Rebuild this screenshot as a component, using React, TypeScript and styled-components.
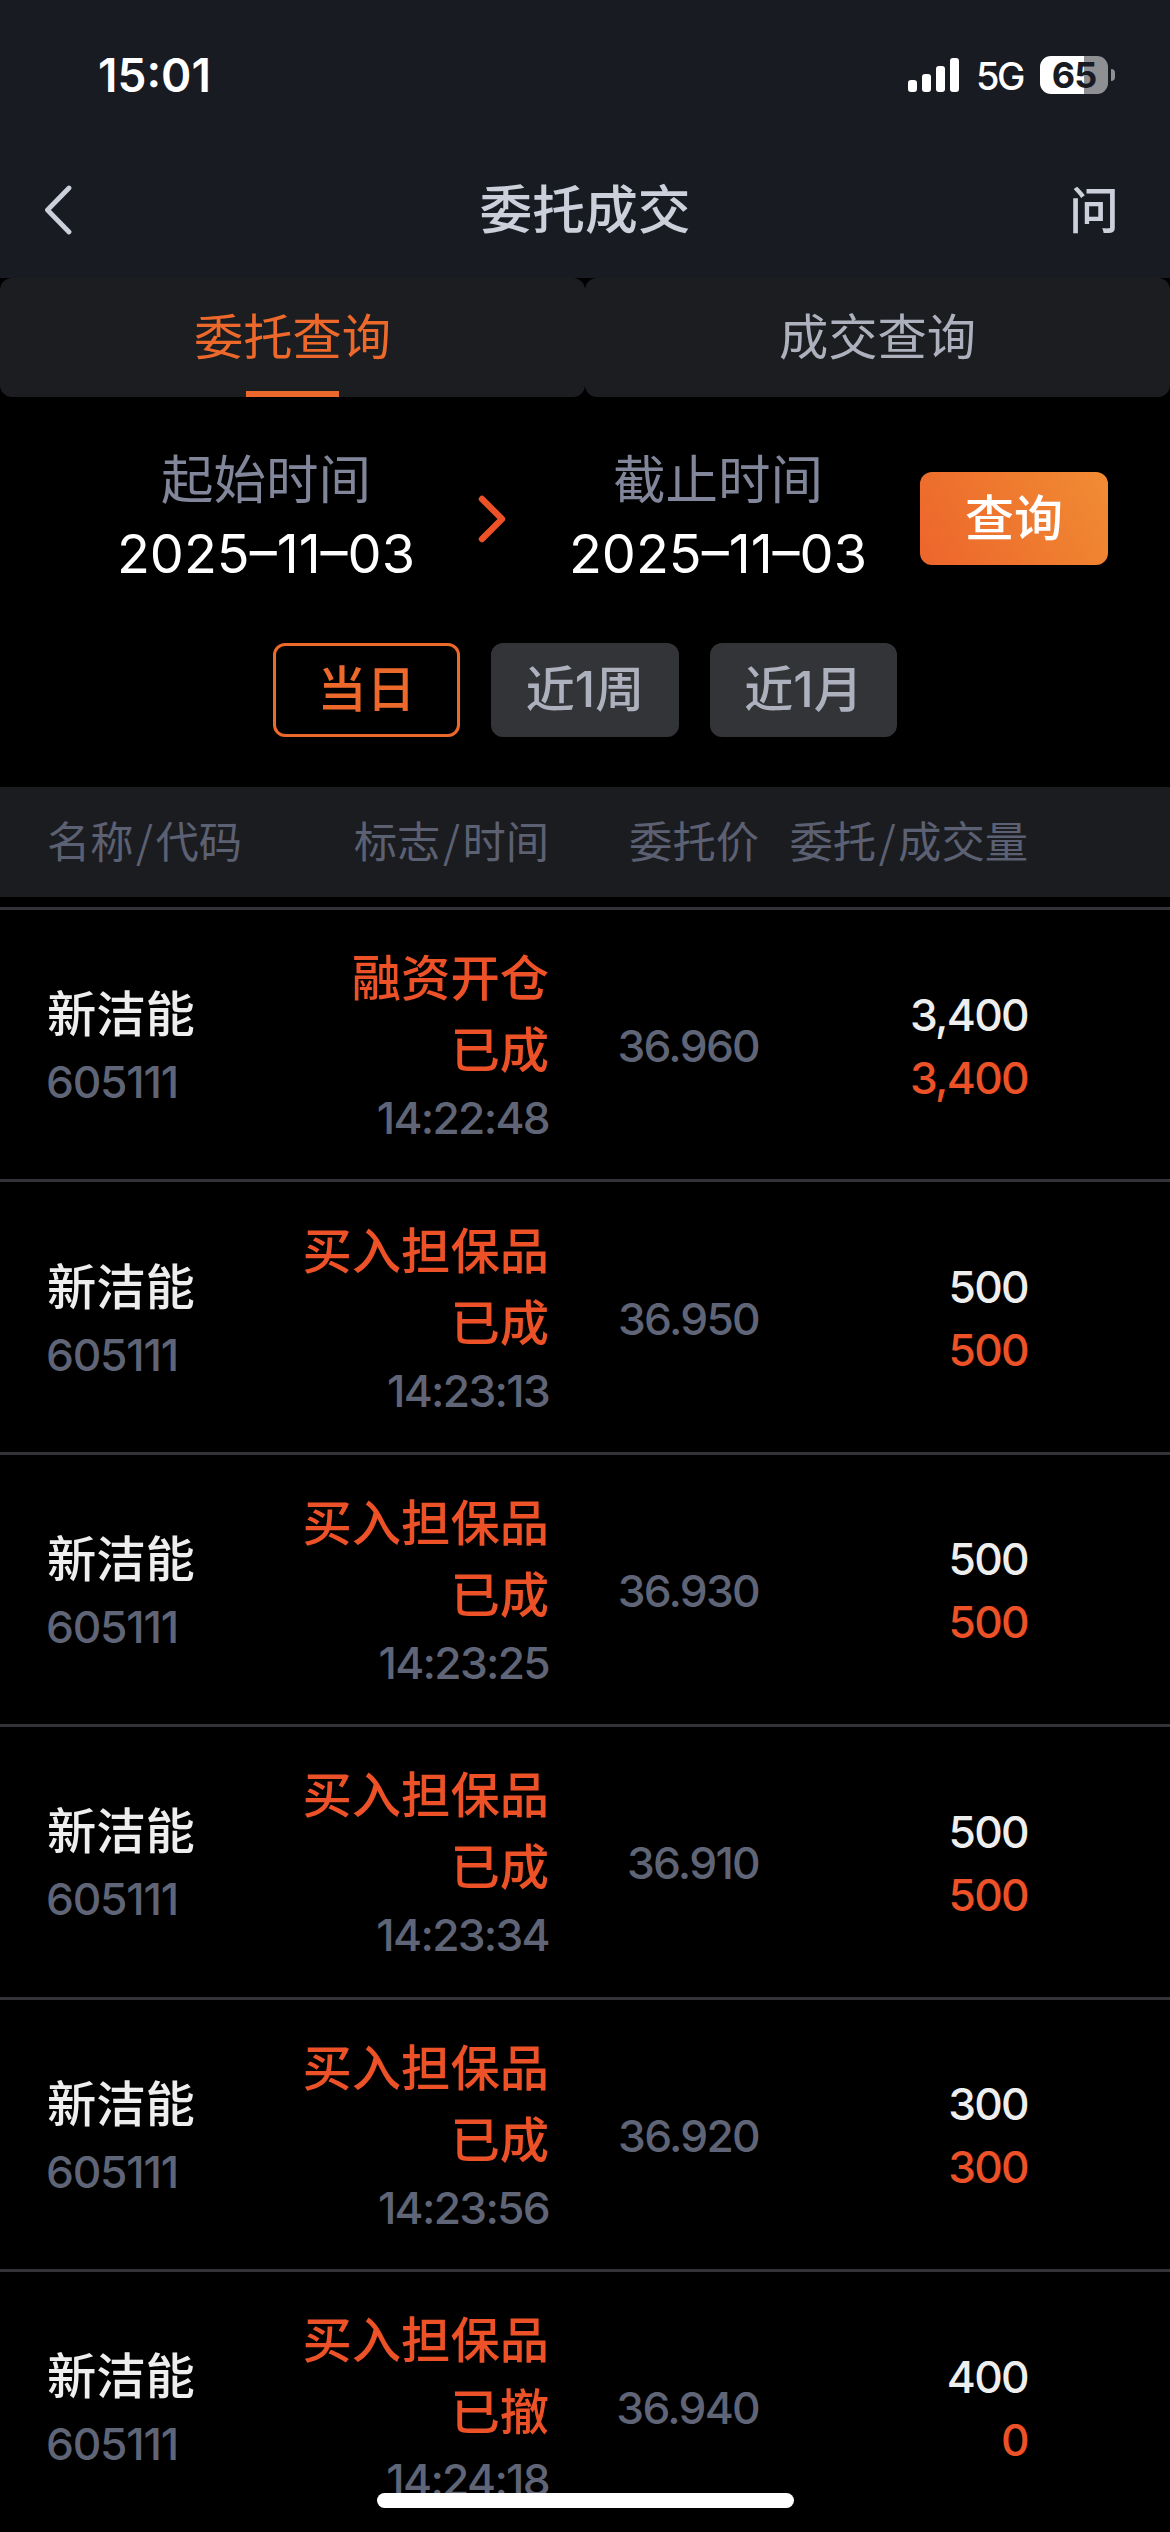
import React from "react";
import styled, { createGlobalStyle } from "styled-components";

const GlobalStyle = createGlobalStyle`
  * { box-sizing: border-box; }
  body { margin: 0; background: #000; }
`;

const Screen = styled.div`
  position: relative;
  display: flex;
  flex-direction: column;
  width: 1170px;
  height: 2532px;
  overflow: hidden;
  background: #000;
  font-family: Inter, "Noto Sans CJK SC", sans-serif;
  white-space: nowrap;
`;

const Top = styled.header`
  flex: none;
  height: 278px;
  background: #181b22;
`;

const StatusBar = styled.div`
  display: flex;
  align-items: center;
  justify-content: space-between;
  height: 149px;
  padding: 0 55px 0 98px;
  color: #fff;
`;

const Clock = styled.span`
  font-size: 46px;
  font-weight: 600;
  line-height: 56px;
`;

const StatusIcons = styled.div`
  display: flex;
  align-items: center;
`;

const Network = styled.span`
  margin: 2px 17px 0 16px;
  font-size: 38px;
  font-weight: 500;
  line-height: 44px;
  letter-spacing: -2.4px;
`;

const Battery = styled.div`
  display: flex;
  align-items: center;
  justify-content: center;
  width: 68px;
  height: 38px;
  border-radius: 11px;
  background: linear-gradient(90deg, #fff 65%, #8f9094 65%);
  color: #181b22;
  font-size: 36px;
  font-weight: 700;
  line-height: 38px;
  letter-spacing: -1px;
`;

const BatteryTip = styled.div`
  width: 4px;
  height: 12px;
  margin-left: 3px;
  border-radius: 0 4px 4px 0;
  background: #8f9094;
`;

const NavBar = styled.nav`
  display: grid;
  grid-template-columns: 200px 1fr 200px;
  align-items: center;
  height: 122px;
  padding: 0 53px;
  color: #ccd0db;
`;

const BackGlyph = styled.svg`
  margin-left: -10px;
`;

const Title = styled.h1`
  margin: 0;
  text-align: center;
  font-size: 52.8px;
  font-weight: 500;
  line-height: 72px;
`;

const Help = styled.span`
  margin-right: -2px;
  padding-top: 2px;
  text-align: right;
  font-size: 50px;
  font-weight: 500;
  line-height: 70px;
`;

const Tabs = styled.div`
  display: grid;
  grid-template-columns: 1fr 1fr;
  flex: none;
  height: 119px;
`;

const Tab = styled.div<{ $active?: boolean }>`
  display: flex;
  flex-direction: column;
  align-items: center;
  justify-content: space-between;
  padding-top: 23px;
  border-radius: 12px;
  background: #1c1d20;
  color: ${(p) => (p.$active ? "#ed692b" : "#adb1bd")};
  font-size: 49.3px;
  line-height: 72px;
`;

const TabLine = styled.div`
  width: 93px;
  height: 6px;
  background: #ed692b;
`;

const Query = styled.section`
  display: flex;
  align-items: center;
  flex: none;
  height: 243px;
  margin-bottom: 3px;
  padding: 0 62px 0 116px;
`;

const DateField = styled.div`
  display: flex;
  flex-direction: column;
  align-items: center;
  width: 300px;
  padding-bottom: 3px;
`;

const DateLabel = styled.span`
  color: #81869a;
  font-size: 52.5px;
  line-height: 74px;
`;

const DateValue = styled.span`
  color: #fff;
  font-size: 54px;
  line-height: 74px;
`;

const Arrow = styled.div`
  display: flex;
  justify-content: center;
  width: 152px;
`;

const Submit = styled.button`
  width: 188px;
  height: 93px;
  margin-left: auto;
  padding: 0;
  border: 0;
  border-radius: 12px;
  background: linear-gradient(60deg, #ed652b, #f08c33);
  color: #fff;
  font-family: inherit;
  font-size: 49px;
  font-weight: 500;
  line-height: 93px;
`;

const Periods = styled.div`
  display: flex;
  justify-content: center;
  gap: 31px;
  flex: none;
  height: 144px;
`;

const Period = styled.button<{ $active?: boolean }>`
  width: 187.5px;
  height: 94px;
  padding: 0;
  border: 3px solid ${(p) => (p.$active ? "#ed692b" : "#333438")};
  border-radius: 12px;
  background: ${(p) => (p.$active ? "#000" : "#333438")};
  color: ${(p) => (p.$active ? "#ed692b" : "#adb1bd")};
  font-family: inherit;
  font-size: 49px;
  font-weight: 500;
  line-height: 88px;
`;

const columns = `
  display: grid;
  grid-template-columns: 240px 262px 210px 269px;
  align-items: center;
  padding-left: 47px;
`;

const TableHead = styled.div`
  ${columns}
  flex: none;
  height: 110px;
  margin-bottom: 10px;
  padding-bottom: 6px;
  background: #1b1c20;
  color: #5b6072;
  font-family: "Noto Sans CJK SC", sans-serif;
  font-size: 43.3px;
`;

const HeadCell = styled.span<{ $left?: boolean }>`
  text-align: ${(p) => (p.$left ? "left" : "right")};
  line-height: 60px;
`;

const Slash = styled.span`
  margin: 0 2.5px;
`;

const Row = styled.div`
  ${columns}
  flex: none;
  height: 272.4px;
  border-top: 3px solid #333438;
  padding-top: 4px;
`;

const Cell = styled.div<{ $left?: boolean }>`
  display: flex;
  flex-direction: column;
  align-items: ${(p) => (p.$left ? "flex-start" : "flex-end")};
`;

const Name = styled.span`
  color: #eee;
  font-size: 49.3px;
  font-weight: 500;
  line-height: 72px;
`;

const Flag = styled(Name)`
  color: #ec5127;
`;

const Muted = styled.span`
  color: #5f6576;
  font-size: 44.3px;
  font-weight: 450;
  line-height: 65px;
  letter-spacing: -1.7px;
`;

const Code = styled(Muted)`
  margin-left: -1px;
  letter-spacing: -1.2px;
`;

const Quantity = styled.span<{ $filled?: boolean }>`
  color: ${(p) => (p.$filled ? "#ec5127" : "#eee")};
  font-size: 44.3px;
  font-weight: 450;
  line-height: 63px;
  letter-spacing: -1.7px;
`;

const HomeIndicator = styled.div`
  position: absolute;
  left: 377px;
  bottom: 24px;
  width: 417px;
  height: 15px;
  border-radius: 8px;
  background: #fff;
`;

const orders = [
  { flag: "融资开仓", status: "已成", time: "14:22:48", price: "36.960", placed: "3,400", filled: "3,400" },
  { flag: "买入担保品", status: "已成", time: "14:23:13", price: "36.950", placed: "500", filled: "500" },
  { flag: "买入担保品", status: "已成", time: "14:23:25", price: "36.930", placed: "500", filled: "500" },
  { flag: "买入担保品", status: "已成", time: "14:23:34", price: "36.910", placed: "500", filled: "500" },
  { flag: "买入担保品", status: "已成", time: "14:23:56", price: "36.920", placed: "300", filled: "300" },
  { flag: "买入担保品", status: "已撤", time: "14:24:18", price: "36.940", placed: "400", filled: "0" },
];

const SignalIcon = () => (
  <svg width="52" height="34" viewBox="0 0 52 34" fill="#fff">
    <rect x="0" y="22" width="9" height="12" rx="3" />
    <rect x="14" y="16" width="9" height="18" rx="3" />
    <rect x="28" y="8" width="9" height="26" rx="3" />
    <rect x="42" y="0" width="9" height="34" rx="3" />
  </svg>
);

const BackIcon = () => (
  <BackGlyph width="30" height="50" viewBox="0 0 30 50" fill="none" stroke="#ccd0db" strokeWidth="4.8" strokeLinecap="round" strokeLinejoin="round">
    <path d="M26 3 L4.5 25 L26 47" />
  </BackGlyph>
);

const ArrowIcon = () => (
  <svg width="30" height="50" viewBox="0 0 30 50" fill="none" stroke="#ec5127" strokeWidth="6.4" strokeLinecap="round" strokeLinejoin="round">
    <path d="M5 5 L25 25 L5 45" />
  </svg>
);

export default function App() {
  return (
    <Screen>
      <GlobalStyle />
      <Top>
        <StatusBar>
          <Clock>15:01</Clock>
          <StatusIcons>
            <SignalIcon />
            <Network>5G</Network>
            <Battery>65</Battery>
            <BatteryTip />
          </StatusIcons>
        </StatusBar>
        <NavBar>
          <BackIcon />
          <Title>委托成交</Title>
          <Help>问</Help>
        </NavBar>
      </Top>
      <Tabs>
        <Tab $active>
          委托查询
          <TabLine />
        </Tab>
        <Tab>成交查询</Tab>
      </Tabs>
      <Query>
        <DateField>
          <DateLabel>起始时间</DateLabel>
          <DateValue>2025–11–03</DateValue>
        </DateField>
        <Arrow>
          <ArrowIcon />
        </Arrow>
        <DateField>
          <DateLabel>截止时间</DateLabel>
          <DateValue>2025–11–03</DateValue>
        </DateField>
        <Submit>查询</Submit>
      </Query>
      <Periods>
        <Period $active>当日</Period>
        <Period>近1周</Period>
        <Period>近1月</Period>
      </Periods>
      <TableHead>
        <HeadCell $left>
          名称<Slash>/</Slash>代码
        </HeadCell>
        <HeadCell>
          标志<Slash>/</Slash>时间
        </HeadCell>
        <HeadCell>委托价</HeadCell>
        <HeadCell>
          委托<Slash>/</Slash>成交量
        </HeadCell>
      </TableHead>
      {orders.map((o) => (
        <Row key={o.time}>
          <Cell $left>
            <Name>新洁能</Name>
            <Code>605111</Code>
          </Cell>
          <Cell>
            <Flag>{o.flag}</Flag>
            <Flag>{o.status}</Flag>
            <Muted>{o.time}</Muted>
          </Cell>
          <Cell>
            <Muted>{o.price}</Muted>
          </Cell>
          <Cell>
            <Quantity>{o.placed}</Quantity>
            <Quantity $filled>{o.filled}</Quantity>
          </Cell>
        </Row>
      ))}
      <HomeIndicator />
    </Screen>
  );
}
